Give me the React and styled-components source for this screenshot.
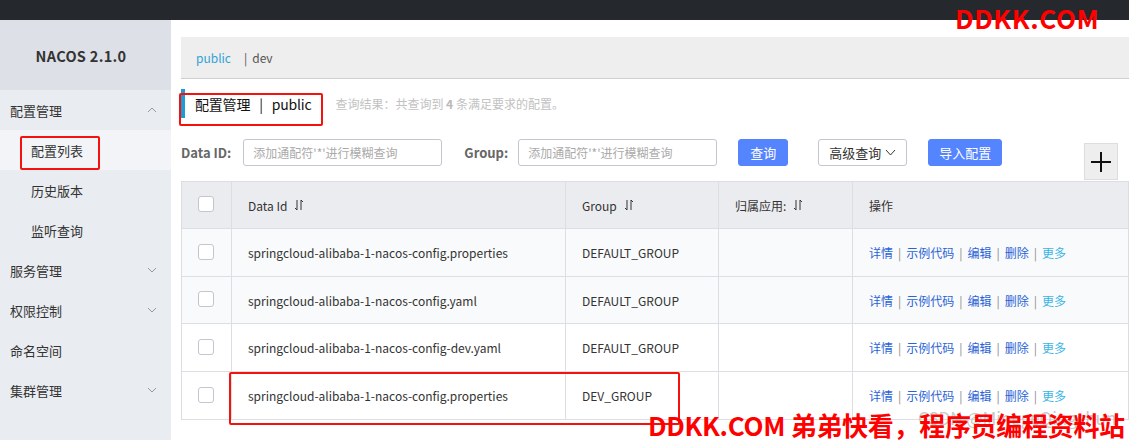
import React from "react";
import styled, { createGlobalStyle } from "styled-components";

const Global = createGlobalStyle`
  html, body { margin: 0; padding: 0; background: #fff; }
  body {
    font-family: "Noto Sans CJK SC", "Noto Sans", sans-serif;
    width: 1129px; height: 440px; overflow: hidden;
  }
  * { box-sizing: border-box; }
`;

const Page = styled.div`
  position: relative;
  width: 1129px;
  height: 440px;
  overflow: hidden;
`;

const TopBar = styled.div`
  height: 20px;
  background: #25292e;
`;

const Body = styled.div`
  display: flex;
  height: 420px;
`;

const Sidebar = styled.aside`
  width: 171px;
  flex: none;
  background: #e9ecf0;
  display: flex;
  flex-direction: column;
`;

const Logo = styled.div`
  height: 70px;
  background: #dde0e6;
  display: flex;
  align-items: center;
  justify-content: center;
  padding-right: 9px;
  font-size: 14.5px;
  font-weight: 700;
  color: #333;
  letter-spacing: 0.3px;
`;

const MenuHeader = styled.div`
  height: 40px;
  padding: 0 10px 0 10px;
  display: flex;
  align-items: center;
  justify-content: space-between;
  font-size: 13px;
  color: #333;
`;

const SubItem = styled.div`
  height: 40px;
  padding-left: 31px;
  display: flex;
  align-items: center;
  font-size: 13px;
  color: #333;
  background: ${(p) => (p.$active ? "#f2f4f7" : "transparent")};
`;

const Chevron = ({ up }) => (
  <svg width="10" height="6" viewBox="0 0 10 6" style={{ marginRight: 4 }}>
    <polyline
      points={up ? "1,5 5,1 9,5" : "1,1 5,5 9,1"}
      fill="none"
      stroke="#999"
      strokeWidth="1"
    />
  </svg>
);

const Main = styled.main`
  flex: 1;
  padding: 17px 0 0 10px;
  display: flex;
  flex-direction: column;
`;

const Breadcrumb = styled.div`
  height: 42px;
  background: #eeeeee;
  border-bottom: 1px solid #cfcfcf;
  display: flex;
  align-items: center;
  padding-left: 15px;
  font-size: 12px;
  color: #555;
  gap: 13px;
`;

const Crumb = styled.span`
  display: flex;
  gap: 5px;
  color: ${(p) => (p.$active ? "#33a2d6" : "#555")};
`;

const TitleRow = styled.div`
  margin-top: 10px;
  height: 29px;
  display: flex;
  align-items: center;
`;

const Title = styled.div`
  height: 29px;
  border-left: 4px solid #1c9bd6;
  padding-left: 10px;
  padding-right: 24px;
  display: flex;
  align-items: center;
  font-size: 14px;
  color: #111;
  letter-spacing: -0.2px;
`;

const Bar = styled.span`
  margin: 0 9px;
`;

const ResultNote = styled.span`
  font-size: 12px;
  color: #c2c2c2;
  b { font-weight: 700; color: #b8b8b8; }
`;

const SearchRow = styled.div`
  margin-top: 21px;
  display: flex;
  align-items: flex-start;
`;

const Label = styled.label`
  height: 27px;
  display: flex;
  align-items: center;
  font-size: 13px;
  font-weight: 700;
  color: #666;
  margin-right: ${(p) => p.$gap}px;
  margin-left: ${(p) => p.$left || 0}px;
`;

const Input = styled.div`
  width: 199px;
  height: 27px;
  border: 1px solid #c4c6cf;
  border-radius: 3px;
  display: flex;
  align-items: center;
  padding-left: 9px;
  font-size: 12px;
  color: #aaa;
  background: #fff;
`;

const Button = styled.div`
  height: 27px;
  margin-left: ${(p) => p.$left}px;
  padding: 0 ${(p) => p.$pad}px;
  border-radius: 3px;
  display: flex;
  align-items: center;
  gap: 4px;
  font-size: 13px;
  background: ${(p) => (p.$primary ? "#5584ff" : "#fff")};
  color: ${(p) => (p.$primary ? "#fff" : "#333")};
  border: 1px solid ${(p) => (p.$primary ? "#5584ff" : "#c4c6cf")};
`;

const PlusButton = styled.div`
  margin-left: auto;
  margin-right: 11px;
  margin-top: 4px;
  width: 34px;
  height: 37px;
  background: #eeeeee;
  border: 1px solid #dddddd;
  display: flex;
  align-items: center;
  justify-content: center;
`;

const Table = styled.div`
  margin-top: 1px;
  border-top: 1px solid #dcdee3;
  border-left: 1px solid #dcdee3;
  display: grid;
  grid-template-columns: 50px 334px 153px 134px 1fr;
`;

const Cell = styled.div`
  height: ${(p) => p.$h}px;
  border-right: 1px solid #dcdee3;
  border-bottom: 1px solid #dcdee3;
  background: ${(p) => (p.$head ? "#ebecf0" : p.$shade ? "#f9fafb" : "#fff")};
  display: flex;
  align-items: center;
  justify-content: ${(p) => (p.$center ? "center" : "flex-start")};
  padding-left: ${(p) => (p.$center ? 0 : 16)}px;
  padding-right: ${(p) => (p.$center ? 1 : 0)}px;
  font-size: 12px;
  color: #333;
  gap: 7px;
  white-space: nowrap;
`;

const Checkbox = styled.span`
  width: 16px;
  height: 16px;
  border: 1px solid #c4c6cf;
  border-radius: 3px;
  background: #fff;
  margin-bottom: 2px;
`;

const Link = styled.span`
  color: ${(p) => (p.$light ? "#3ab5e6" : "#2a63d6")};
`;

const Sep = styled.span`
  color: #8a8a8a;
  margin: 0 5px;
`;

const SortIcon = () => (
  <svg width="10" height="12" viewBox="0 0 10 12">
    <path d="M3 1V11L1 9M7 11V1L9 3" fill="none" stroke="#333" strokeWidth="1" />
  </svg>
);

const Annotation = styled.div`
  position: absolute;
  border: 2px solid #f4120f;
  border-radius: 2px;
  left: ${(p) => p.$x}px;
  top: ${(p) => p.$y}px;
  width: ${(p) => p.$w}px;
  height: ${(p) => p.$h}px;
  pointer-events: none;
`;

const Watermark = styled.div`
  position: absolute;
  left: ${(p) => p.$x}px;
  top: ${(p) => p.$y}px;
  font-family: "Noto Sans CJK SC", "Noto Sans", sans-serif;
  font-weight: 700;
  font-size: 26px;
  line-height: 1;
  color: #ff0000;
  white-space: nowrap;
  letter-spacing: ${(p) => p.$ls}px;
`;

const FaintMark = styled.div`
  position: absolute;
  left: 918px;
  top: 409px;
  font-size: 17px;
  line-height: 1.1;
  color: #c9c9c9;
  white-space: nowrap;
`;

const rows = [
  { id: "springcloud-alibaba-1-nacos-config.properties", group: "DEFAULT_GROUP", shade: true, h: 48 },
  { id: "springcloud-alibaba-1-nacos-config.yaml", group: "DEFAULT_GROUP", shade: true, h: 47 },
  { id: "springcloud-alibaba-1-nacos-config-dev.yaml", group: "DEFAULT_GROUP", h: 48 },
  { id: "springcloud-alibaba-1-nacos-config.properties", group: "DEV_GROUP", h: 48 },
];

const Actions = () => (
  <span>
    <Link>详情</Link>
    <Sep>|</Sep>
    <Link>示例代码</Link>
    <Sep>|</Sep>
    <Link>编辑</Link>
    <Sep>|</Sep>
    <Link>删除</Link>
    <Sep>|</Sep>
    <Link $light>更多</Link>
  </span>
);

export default function App() {
  return (
    <Page>
      <Global />
      <TopBar />
      <Body>
        <Sidebar>
          <Logo>NACOS 2.1.0</Logo>
          <MenuHeader>
            配置管理 <Chevron up />
          </MenuHeader>
          <SubItem $active>配置列表</SubItem>
          <SubItem>历史版本</SubItem>
          <SubItem>监听查询</SubItem>
          <MenuHeader>
            服务管理 <Chevron />
          </MenuHeader>
          <MenuHeader>
            权限控制 <Chevron />
          </MenuHeader>
          <MenuHeader>命名空间</MenuHeader>
          <MenuHeader>
            集群管理 <Chevron />
          </MenuHeader>
        </Sidebar>
        <Main>
          <Breadcrumb>
            <Crumb $active>public</Crumb>
            <Crumb>
              <span>|</span>
              <span>dev</span>
            </Crumb>
          </Breadcrumb>
          <TitleRow>
            <Title>
              配置管理<Bar>|</Bar>public
            </Title>
            <ResultNote>
              查询结果：共查询到 <b>4</b> 条满足要求的配置。
            </ResultNote>
          </TitleRow>
          <SearchRow>
            <Label $gap={12}>Data ID:</Label>
            <Input>添加通配符'*'进行模糊查询</Input>
            <Label $left={22} $gap={10}>Group:</Label>
            <Input>添加通配符'*'进行模糊查询</Input>
            <Button $primary $left={21} $pad={11}>查询</Button>
            <Button $left={30} $pad={10}>
              高级查询
              <svg width="11" height="7" viewBox="0 0 11 7">
                <polyline points="1,1 5.5,6 10,1" fill="none" stroke="#333" strokeWidth="1" />
              </svg>
            </Button>
            <Button $primary $left={21} $pad={10}>导入配置</Button>
            <PlusButton>
              <svg width="22" height="22" viewBox="0 0 22 22">
                <path d="M11 1V21M1 11H21" stroke="#111" strokeWidth="2" />
              </svg>
            </PlusButton>
          </SearchRow>
          <Table>
            <Cell $head $center $h={47}>
              <Checkbox />
            </Cell>
            <Cell $head $h={47}>
              Data Id <SortIcon />
            </Cell>
            <Cell $head $h={47}>
              Group <SortIcon />
            </Cell>
            <Cell $head $h={47}>
              归属应用: <SortIcon />
            </Cell>
            <Cell $head $h={47}>操作</Cell>
            {rows.map((r, i) => (
              <React.Fragment key={i}>
                <Cell $center $shade={r.shade} $h={r.h}>
                  <Checkbox />
                </Cell>
                <Cell $shade={r.shade} $h={r.h}>{r.id}</Cell>
                <Cell $shade={r.shade} $h={r.h}>{r.group}</Cell>
                <Cell $shade={r.shade} $h={r.h} />
                <Cell $shade={r.shade} $h={r.h}>
                  <Actions />
                </Cell>
              </React.Fragment>
            ))}
          </Table>
        </Main>
      </Body>

      <Annotation $x={20} $y={136} $w={80} $h={34} />
      <Annotation $x={179} $y={93} $w={144} $h={33} />
      <Annotation $x={229} $y={372} $w={451} $h={53} />

      <FaintMark>CSDN @MinggeQingchun</FaintMark>
      <Watermark $x={955} $y={5} $ls={0.6}>DDKK.COM</Watermark>
      <Watermark $x={648} $y={412} $ls={-0.3}>DDKK.COM 弟弟快看，程序员编程资料站</Watermark>
    </Page>
  );
}
